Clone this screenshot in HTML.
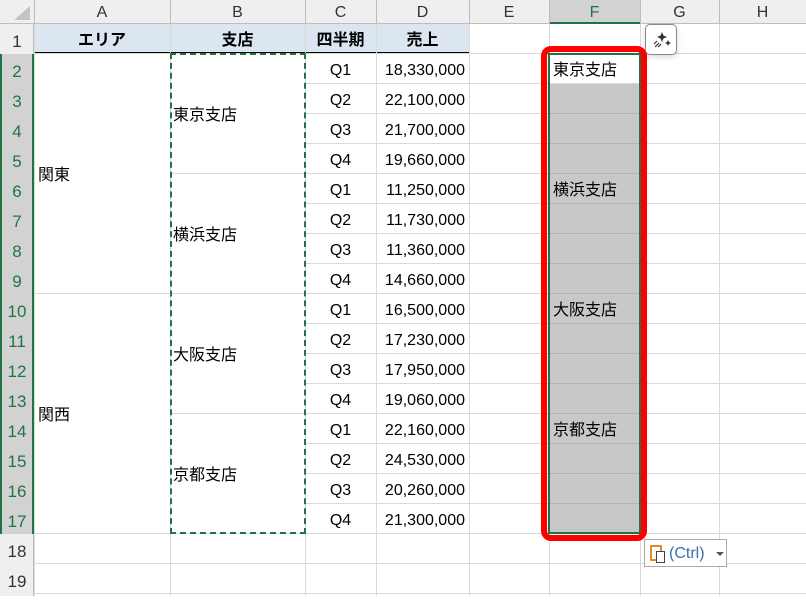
<!DOCTYPE html><html><head><meta charset="utf-8"><style>
body{margin:0;width:806px;height:596px;overflow:hidden;background:#fff;font-family:"Liberation Sans","Noto Sans CJK JP",sans-serif;position:relative}
div{position:absolute;box-sizing:border-box}
.v{width:1px;background:#d9d9d9}
.h{height:1px;background:#d9d9d9}
.t{font-size:16px;color:#000;line-height:34px;white-space:nowrap}
.ch{top:0;height:24px;line-height:26px;text-align:center;font-size:16px;color:#333}
.rh{left:0;width:34px;height:30px;line-height:36px;text-align:center;font-size:17px;color:#333}
</style></head><body>
<div style="left:0;top:0;width:806px;height:24px;background:#efefef;border-bottom:1px solid #bdbdbd"></div>
<div style="left:0;top:24px;width:34px;height:572px;background:#efefef;border-right:1px solid #bdbdbd"></div>
<div style="left:0;top:54px;width:34px;height:480px;background:#d2d2d2;border-right:2px solid #217346"></div>
<div style="left:0;top:54px;width:2px;height:480px;background:#217346"></div>
<div style="left:549px;top:0;width:91px;height:24px;background:#d2d2d2;border-bottom:2px solid #217346"></div>
<div style="left:14px;top:6px;width:0;height:0;border-left:16px solid transparent;border-bottom:14px solid #c4c4c4"></div>
<div class="ch" style="left:34px;width:136px">A</div>
<div class="ch" style="left:170px;width:135px">B</div>
<div class="ch" style="left:305px;width:71px">C</div>
<div class="ch" style="left:376px;width:93px">D</div>
<div class="ch" style="left:469px;width:80px">E</div>
<div class="ch" style="left:549px;width:91px;color:#217346">F</div>
<div class="ch" style="left:640px;width:79px">G</div>
<div class="ch" style="left:719px;width:87px">H</div>
<div class="v" style="left:34px;top:0;height:24px;background:#bdbdbd"></div>
<div class="v" style="left:170px;top:0;height:24px;background:#bdbdbd"></div>
<div class="v" style="left:305px;top:0;height:24px;background:#bdbdbd"></div>
<div class="v" style="left:376px;top:0;height:24px;background:#bdbdbd"></div>
<div class="v" style="left:469px;top:0;height:24px;background:#bdbdbd"></div>
<div class="v" style="left:549px;top:0;height:24px;background:#bdbdbd"></div>
<div class="v" style="left:640px;top:0;height:24px;background:#bdbdbd"></div>
<div class="v" style="left:719px;top:0;height:24px;background:#bdbdbd"></div>
<div style="left:34px;top:24px;width:435px;height:30px;background:#dce6f1;border-bottom:2px solid #000"></div>
<div class="t" style="left:34px;top:24px;width:136px;text-align:center;font-weight:bold">エリア</div>
<div class="t" style="left:170px;top:24px;width:135px;text-align:center;font-weight:bold">支店</div>
<div class="t" style="left:305px;top:24px;width:71px;text-align:center;font-weight:bold">四半期</div>
<div class="t" style="left:376px;top:24px;width:93px;text-align:center;font-weight:bold">売上</div>
<div class="v" style="left:170px;top:24px;height:572px"></div>
<div class="v" style="left:305px;top:24px;height:572px"></div>
<div class="v" style="left:376px;top:24px;height:572px"></div>
<div class="v" style="left:469px;top:24px;height:572px"></div>
<div class="v" style="left:549px;top:24px;height:572px"></div>
<div class="v" style="left:640px;top:24px;height:572px"></div>
<div class="v" style="left:719px;top:24px;height:572px"></div>
<div class="v" style="left:34px;top:24px;height:572px"></div>
<div class="h" style="left:34px;top:53px;width:772px"></div>
<div class="h" style="left:305px;top:83px;width:501px"></div>
<div class="h" style="left:305px;top:113px;width:501px"></div>
<div class="h" style="left:305px;top:143px;width:501px"></div>
<div class="h" style="left:170px;top:173px;width:636px"></div>
<div class="h" style="left:305px;top:203px;width:501px"></div>
<div class="h" style="left:305px;top:233px;width:501px"></div>
<div class="h" style="left:305px;top:263px;width:501px"></div>
<div class="h" style="left:34px;top:293px;width:772px"></div>
<div class="h" style="left:305px;top:323px;width:501px"></div>
<div class="h" style="left:305px;top:353px;width:501px"></div>
<div class="h" style="left:305px;top:383px;width:501px"></div>
<div class="h" style="left:170px;top:413px;width:636px"></div>
<div class="h" style="left:305px;top:443px;width:501px"></div>
<div class="h" style="left:305px;top:473px;width:501px"></div>
<div class="h" style="left:305px;top:503px;width:501px"></div>
<div class="h" style="left:34px;top:533px;width:772px"></div>
<div class="h" style="left:34px;top:563px;width:772px"></div>
<div class="h" style="left:34px;top:593px;width:772px"></div>
<div class="rh" style="top:24px">1</div>
<div class="rh" style="top:54px;color:#217346">2</div>
<div class="rh" style="top:84px;color:#217346">3</div>
<div class="rh" style="top:114px;color:#217346">4</div>
<div class="rh" style="top:144px;color:#217346">5</div>
<div class="rh" style="top:174px;color:#217346">6</div>
<div class="rh" style="top:204px;color:#217346">7</div>
<div class="rh" style="top:234px;color:#217346">8</div>
<div class="rh" style="top:264px;color:#217346">9</div>
<div class="rh" style="top:294px;color:#217346">10</div>
<div class="rh" style="top:324px;color:#217346">11</div>
<div class="rh" style="top:354px;color:#217346">12</div>
<div class="rh" style="top:384px;color:#217346">13</div>
<div class="rh" style="top:414px;color:#217346">14</div>
<div class="rh" style="top:444px;color:#217346">15</div>
<div class="rh" style="top:474px;color:#217346">16</div>
<div class="rh" style="top:504px;color:#217346">17</div>
<div class="rh" style="top:534px">18</div>
<div class="rh" style="top:564px">19</div>
<div class="t" style="left:38px;top:159px">関東</div>
<div class="t" style="left:38px;top:399px">関西</div>
<div class="t" style="left:173px;top:99px">東京支店</div>
<div class="t" style="left:173px;top:219px">横浜支店</div>
<div class="t" style="left:173px;top:339px">大阪支店</div>
<div class="t" style="left:173px;top:459px">京都支店</div>
<div style="left:170px;top:53px;width:136px;height:481px;border:2px dashed #217346"></div>
<div id="cd"></div>
<div style="left:549px;top:84px;width:91px;height:450px;background:repeating-linear-gradient(#c8c8c8 0 29px,#b4b4b4 29px 30px)"></div>
<div class="t" style="left:553px;top:54px">東京支店</div>
<div class="t" style="left:553px;top:174px">横浜支店</div>
<div class="t" style="left:553px;top:294px">大阪支店</div>
<div class="t" style="left:553px;top:414px">京都支店</div>
<div style="left:548px;top:53px;width:93px;height:481px;border:2px solid #217346"></div>
<div style="left:541px;top:46px;width:106px;height:495px;border:6px solid #f00;border-radius:10px"></div>
<div style="left:645px;top:24px;width:32px;height:31px;border:1px solid #888;border-radius:5px;background:#fff;box-shadow:0 2px 6px rgba(0,0,0,.15)">
<svg width="30" height="29" viewBox="0 0 30 29"><path d="M16 7l1.5 3.5L21 12l-3.5 1.5L16 17l-1.5-3.5L11 12l3.5-1.5z M22 15l1 2 2 1-2 1-1 2-1-2-2-1 2-1z" fill="#333"/><path d="M8 19l3-3M9 22l4-4M12 22l3-3" stroke="#333" stroke-width="1.2"/></svg></div>
<div style="left:644px;top:539px;width:83px;height:28px;border:1px solid #aaa;background:#fff">
<div style="left:5px;top:5px;width:12px;height:16px;border:2px solid #e0882a;border-radius:1px"></div>
<div style="left:11px;top:11px;width:9px;height:12px;border:1.5px solid #444;background:#fff"></div>
<div style="left:24px;top:5px;font-size:16px;color:#3a6fb0">(Ctrl)</div>
<div style="left:71px;top:12px;border-left:4px solid transparent;border-right:4px solid transparent;border-top:4px solid #555"></div>
</div>
<script>
var s=["18,330,000","22,100,000","21,700,000","19,660,000","11,250,000","11,730,000","11,360,000","14,660,000","16,500,000","17,230,000","17,950,000","19,060,000","22,160,000","24,530,000","20,260,000","21,300,000"],h="";
for(var i=0;i<16;i++){h+='<div class="t" style="left:305px;top:'+(54+30*i)+'px;width:71px;text-align:center">Q'+(i%4+1)+'</div><div class="t" style="left:376px;top:'+(54+30*i)+'px;width:89px;text-align:right">'+s[i]+'</div>';}
document.getElementById('cd').outerHTML=h;
</script>
</body></html>
